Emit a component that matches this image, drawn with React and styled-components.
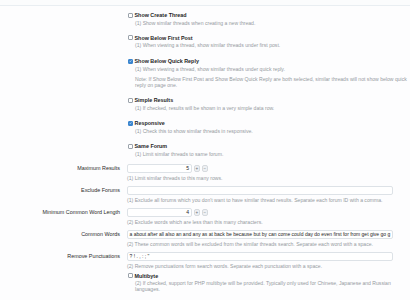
import React from 'react';
import styled, { createGlobalStyle } from 'styled-components';

const GlobalStyle = createGlobalStyle`
  html, body {
    margin: 0;
    padding: 0;
    background: #fdfdfe;
  }
  body {
    font-family: "Liberation Sans", Arial, sans-serif;
    -webkit-font-smoothing: antialiased;
  }
`;

const Page = styled.div`
  width: 410px;
  height: 300px;
  overflow: hidden;
`;

const TopBar = styled.div`
  height: 5px;
  border-bottom: 1px solid #e9eef2;
  background: #fbfcfd;
`;

const Form = styled.div`
  padding-top: 5.5px;
  display: flex;
  flex-direction: column;
`;

const Row = styled.div`
  display: grid;
  grid-template-columns: 120px 266px;
  column-gap: 7px;
  margin-bottom: ${(p) => p.gap ?? 0}px;
`;

const Label = styled.div`
  text-align: right;
  font-size: 5.4px;
  line-height: 9px;
  color: #2b2b2b;
  white-space: nowrap;
`;

const Control = styled.div`
  display: flex;
  flex-direction: column;
  min-width: 0;
`;

const CheckLine = styled.div`
  display: flex;
  align-items: center;
  height: 7px;
  gap: 1.5px;
`;

const Box = styled.span`
  box-sizing: border-box;
  width: 5px;
  height: 5px;
  margin-left: 1px;
  border-radius: 1px;
  border: 0.7px solid ${(p) => (p.checked ? '#3b86cf' : '#9ba3ab')};
  background: ${(p) => (p.checked ? '#3b86cf' : '#fff')};
  display: flex;
  align-items: center;
  justify-content: center;
`;

const CheckText = styled.span`
  font-size: 5.4px;
  font-weight: 600;
  color: #1f1f1f;
  white-space: nowrap;
`;

const Hint = styled.div`
  font-size: 5.1px;
  line-height: 6px;
  color: #959aa1;
  white-space: nowrap;
  margin-top: ${(p) => p.top ?? 1}px;
  padding-left: ${(p) => (p.indent ? 8 : 0)}px;
`;

const InputLine = styled.div`
  display: flex;
  align-items: center;
  gap: 1.5px;
`;

const TextInput = styled.div`
  box-sizing: border-box;
  width: ${(p) => p.w || 266}px;
  height: 9px;
  background: #fff;
  border: 1px solid #dde2e7;
  border-radius: 2px;
  font-size: 5px;
  line-height: 7px;
  color: #1e1e1e;
  padding: 0 2px 0 1.5px;
  white-space: nowrap;
  overflow: hidden;
  text-align: ${(p) => (p.right ? 'right' : 'left')};
`;

const Spin = styled.span`
  box-sizing: border-box;
  width: 6.5px;
  height: 7px;
  border-radius: 2px;
  background: #eef0f3;
  border: 0.6px solid #d6dade;
  font-size: 4.5px;
  line-height: 6px;
  text-align: center;
  color: #6b7076;
`;

const Tick = () => (
  <svg width="4" height="4" viewBox="0 0 10 10">
    <path d="M2 5.2 L4.2 7.4 L8.2 2.8" fill="none" stroke="#fff" strokeWidth="1.8" />
  </svg>
);

const Check = ({ text, checked, hints, noteTop, gap }) => (
  <Row gap={gap}>
    <div />
    <Control>
      <CheckLine>
        <Box checked={checked}>{checked && <Tick />}</Box>
        <CheckText>{text}</CheckText>
      </CheckLine>
      {hints.map((h, i) => (
        <Hint key={i} indent top={i === 0 ? 1 : noteTop && i === 1 ? noteTop : 0}>
          {h}
        </Hint>
      ))}
    </Control>
  </Row>
);

const Field = ({ label, value, hint, number, gap = 5 }) => (
  <Row gap={gap}>
    <Label>{label}</Label>
    <Control>
      <InputLine>
        <TextInput w={number ? 65 : 266} right={number}>
          {value}
        </TextInput>
        {number && (
          <>
            <Spin>+</Spin>
            <Spin>−</Spin>
          </>
        )}
      </InputLine>
      <Hint top={2}>{hint}</Hint>
    </Control>
  </Row>
);

export default function App() {
  return (
    <Page>
      <GlobalStyle />
      <TopBar />
      <Form>
        <Check
          gap={8.5}
          text="Show Create Thread"
          hints={['(1) Show similar threads when creating a new thread.']}
        />
        <Check
          gap={9.5}
          text="Show Below First Post"
          hints={['(1) When viewing a thread, show similar threads under first post.']}
        />
        <Check
          gap={8.5}
          checked
          text="Show Below Quick Reply"
          noteTop={4.5}
          hints={[
            '(1) When viewing a thread, show similar threads under quick reply.',
            'Note: If Show Below First Post and Show Below Quick Reply are both selected, similar threads will not show below quick',
            'reply on page one.',
          ]}
        />
        <Check
          gap={9}
          text="Simple Results"
          hints={['(1) If checked, results will be shown in a very simple data row.']}
        />
        <Check
          gap={9}
          checked
          text="Responsive"
          hints={['(1) Check this to show similar threads in responsive.']}
        />
        <Check
          gap={7.5}
          text="Same Forum"
          hints={['(1) Limit similar threads to same forum.']}
        />
        <Field
          label="Maximum Results"
          value="5"
          number
          hint="(1) Limit similar threads to this many rows."
        />
        <Field
          label="Exclude Forums"
          value=""
          hint="(1) Exclude all forums which you don't want to have similar thread results. Separate each forum ID with a comma."
        />
        <Field
          label="Minimum Common Word Length"
          value="4"
          number
          hint="(2) Exclude words which are less than this many characters."
        />
        <Field
          label="Common Words"
          value="a about after all also an and any as at back be because but by can come could day do even first for from get give go g"
          hint="(2) These common words will be excluded from the similar threads search. Separate each word with a space."
        />
        <Field
          label="Remove Punctuations"
          value={'? ! . , : ; "'}
          gap={3}
          hint="(2) Remove punctuations form search words. Separate each punctuation with a space."
        />
        <Check
          text="Multibyte"
          hints={[
            '(2) If checked, support for PHP multibyte will be provided. Typically only used for Chinese, Japanese and Russian',
            'languages.',
          ]}
        />
      </Form>
    </Page>
  );
}
